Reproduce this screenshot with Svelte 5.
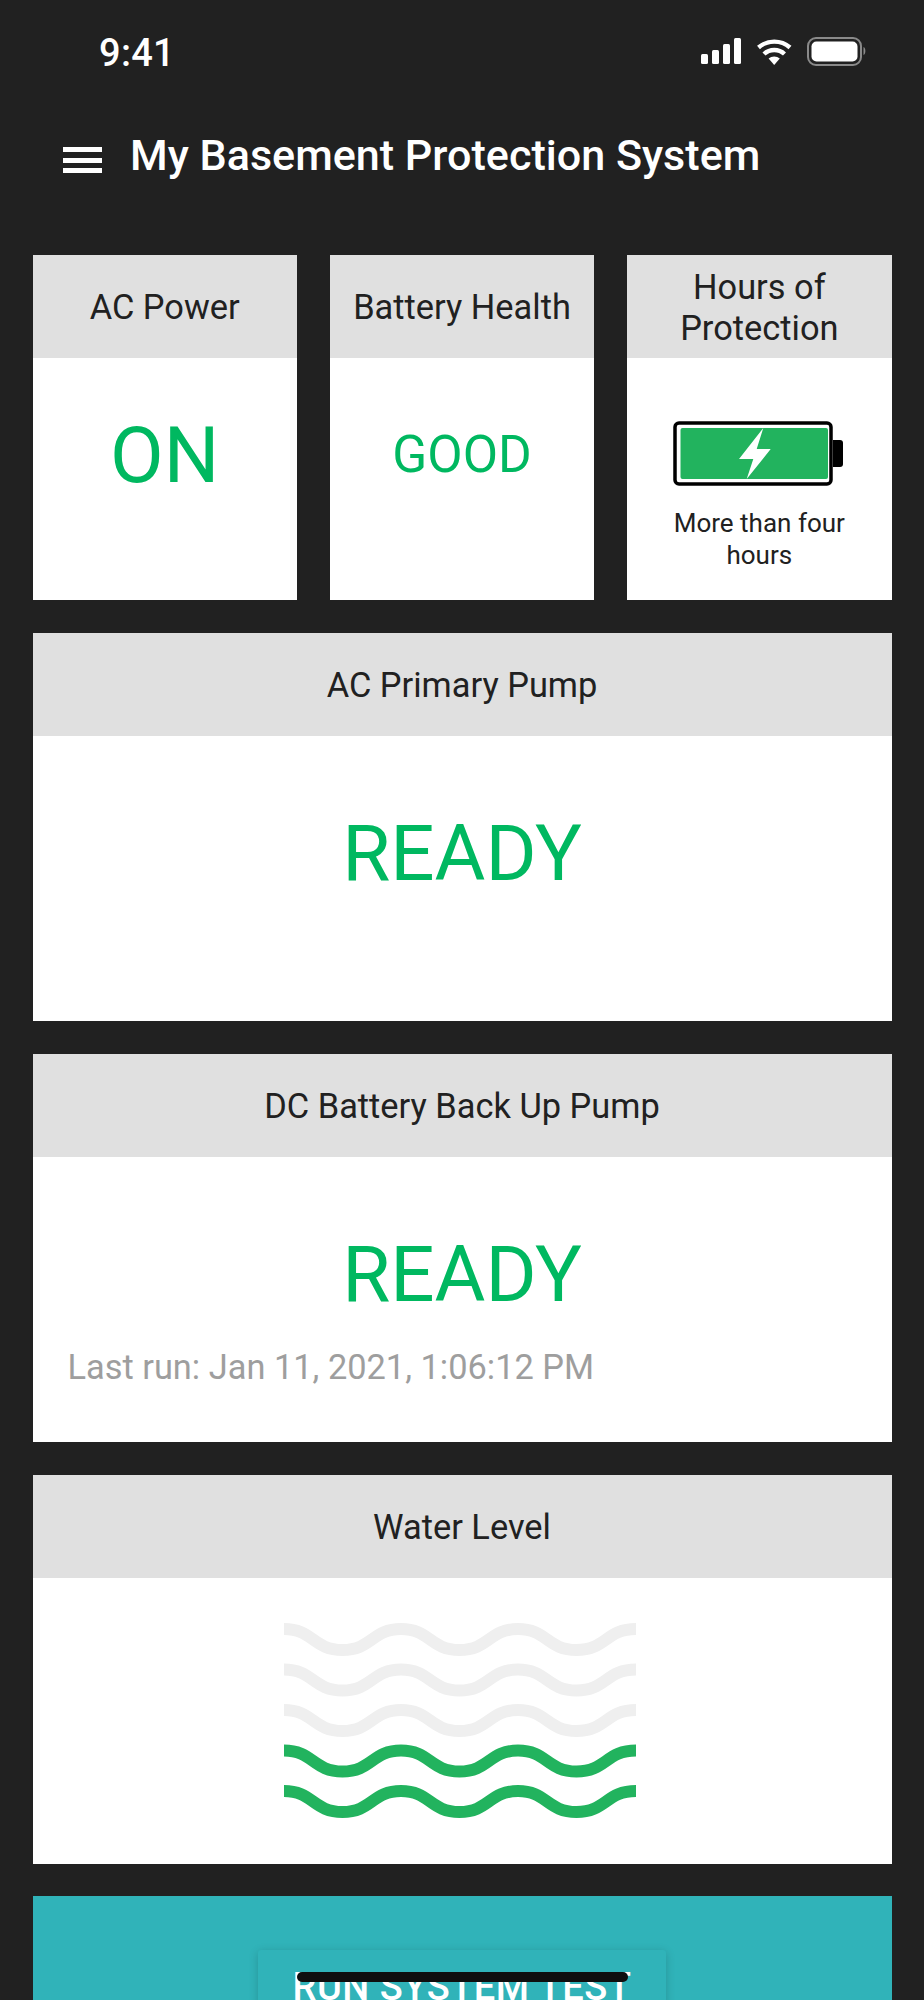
<script>
  const waves = [
    { y: 6, on: false },
    { y: 46.5, on: false },
    { y: 87, on: false },
    { y: 127.5, on: true },
    { y: 168, on: true }
  ]

  function wavePath(y) {
    const top = y
    const low = y + 21
    return `M0 ${top} C29 ${top} 29 ${low} 58.5 ${low} S88 ${top} 117 ${top} S146 ${low} 175.5 ${low} S205 ${top} 234 ${top} S263 ${low} 292.5 ${low} S322 ${top} 352 ${top}`
  }
</script>

<div class="screen">
  <div class="status">
    <span class="time">9:41</span>
    <svg class="status-icons" width="166" height="30" viewBox="0 0 166 30">
      <g fill="#fff">
        <rect x="1" y="17" width="7" height="10" rx="1.5" />
        <rect x="12" y="13" width="7" height="14" rx="1.5" />
        <rect x="23" y="7" width="7" height="20" rx="1.5" />
        <rect x="34" y="1" width="7" height="26" rx="1.5" />
      </g>
      <g fill="none" stroke="#fff" stroke-width="4.4">
        <path d="M58.5 10.5 A24 24 0 0 1 90 10.5" />
        <path d="M64 17 A15 15 0 0 1 84.5 17" />
      </g>
      <path d="M74.2 28 L68.6 21.6 A8.5 8.5 0 0 1 79.8 21.6 Z" fill="#fff" />
      <rect x="108" y="1" width="53" height="27" rx="8" fill="none" stroke="#8a8a8a" stroke-width="2" />
      <rect x="111.5" y="4.5" width="46" height="20" rx="5" fill="#fff" />
      <path d="M163.5 10 C166 11 166 17 163.5 18 Z" fill="#8a8a8a" />
    </svg>
  </div>

  <header class="app-bar">
    <span class="menu"><i></i><i></i><i></i></span>
    <h1>My Basement Protection System</h1>
  </header>

  <main>
    <div class="top-row">
      <section class="card">
        <h2>AC Power</h2>
        <div class="body"><p class="big on">ON</p></div>
      </section>
      <section class="card">
        <h2>Battery Health</h2>
        <div class="body"><p class="good">GOOD</p></div>
      </section>
      <section class="card">
        <h2>Hours of Protection</h2>
        <div class="body hours">
          <svg width="172" height="66" viewBox="0 0 172 66">
            <rect x="2" y="2" width="156" height="61" rx="4" fill="#fff" stroke="#000" stroke-width="3.5" />
            <rect x="7.500" y="7" width="147.500" height="51" rx="2" fill="#22b35e" />
            <path d="M90.300 7 L66 38 L80.300 38 L73.700 58 L97.700 28 L83.700 28 Z" fill="#fff" />
            <path d="M160 19 H167 Q170 19 170 22 V43 Q170 46 167 46 H160 Z" fill="#000" />
          </svg>
          <p>More than four hours</p>
        </div>
      </section>
    </div>

    <section class="card wide">
      <h2>AC Primary Pump</h2>
      <div class="body"><p class="big">READY</p></div>
    </section>

    <section class="card wide">
      <h2>DC Battery Back Up Pump</h2>
      <div class="body">
        <p class="big">READY</p>
        <p class="last-run">Last run: Jan 11, 2021, 1:06:12 PM</p>
      </div>
    </section>

    <section class="card wide">
      <h2>Water Level</h2>
      <div class="body water">
        <svg width="353" height="196" viewBox="0 0 353 196">
          {#each waves as w}
            <path d={wavePath(w.y)} fill="none" stroke={w.on ? '#22b35e' : '#efefef'} stroke-width="12" />
          {/each}
        </svg>
      </div>
    </section>

    <section class="test-panel">
      <button type="button">RUN SYSTEM TEST</button>
    </section>
  </main>

  <div class="home-bar"></div>
</div>

<style>
  :global(body) {
    margin: 0;
    background: #212121;
  }

  .screen {
    position: relative;
    height: 2000px;
    overflow: hidden;
    background: #212121;
    font-family: Roboto, sans-serif;
  }

  .status {
    display: flex;
    justify-content: space-between;
    align-items: center;
    height: 52px;
    padding: 26px 58px 0 99px;
    color: #fff;
  }

  .time {
    margin-top: 2px;
    font-size: 38px;
    font-weight: 500;
    line-height: 54px;
    letter-spacing: .3px;
  }

  .app-bar {
    display: flex;
    align-items: center;
    height: 62px;
    padding: 46px 0 0 63px;
    gap: 28px;
  }

  .menu {
    display: flex;
    flex-direction: column;
    gap: 5.500px;
    width: 39px;
    margin-top: 10px;
  }

  .menu i {
    display: block;
    height: 5px;
    background: #fff;
  }

  h1 {
    margin: 2px 0 0;
    color: #fff;
    font-size: 43.100px;
    font-weight: 500;
    line-height: 62px;
  }

  main {
    display: flex;
    flex-direction: column;
    gap: 32.800px;
    padding: 69px 32.500px 0;
  }

  .top-row {
    display: grid;
    grid-template-columns: repeat(3, 1fr);
    gap: 33px;
  }

  .card {
    display: flex;
    flex-direction: column;
    height: 345px;
    background: #fff;
  }

  .wide {
    height: 388.400px;
  }

  h2 {
    display: flex;
    align-items: center;
    justify-content: center;
    flex: none;
    box-sizing: border-box;
    height: 103px;
    margin: 0;
    padding: 2px 6px 0;
    background: #e0e0e0;
    color: #212121;
    font-size: 34.400px;
    font-weight: 400;
    line-height: 41px;
    text-align: center;
  }

  .body {
    flex: 1;
    display: flex;
    flex-direction: column;
    align-items: center;
    padding: 0 35px;
  }

  p {
    margin: 0;
  }

  .big {
    margin-top: 76px;
    color: #00b860;
    font-size: 78px;
    line-height: 84px;
  }

  .on {
    margin-top: 56px;
  }

  .good {
    margin-top: 69px;
    color: #00b860;
    font-size: 51.400px;
    line-height: 56px;
  }

  .hours {
    padding: 63px 20px 0;
    color: #212121;
    font-size: 26px;
    line-height: 32px;
    text-align: center;
  }

  .hours p {
    margin-top: 20px;
  }

  .last-run {
    align-self: flex-start;
    margin-top: 30px;
    color: #9e9e9e;
    font-size: 34.400px;
    line-height: 40px;
  }

  .water {
    padding: 45px 37px 0 33px;
  }

  .test-panel {
    display: flex;
    justify-content: center;
    height: 300px;
    padding-top: 54px;
    background: #30b3b9;
  }

  button {
    box-sizing: border-box;
    width: 408px;
    height: 96px;
    padding: 0 0 22px;
    border: 0;
    border-radius: 3px;
    background: #30b3b9;
    box-shadow: 0 2px 10px rgba(0, 0, 0, .18);
    color: #fff;
    font-family: inherit;
    font-size: 38px;
    font-weight: 500;
    letter-spacing: .5px;
  }

  .home-bar {
    position: absolute;
    left: 297px;
    top: 1972px;
    width: 331px;
    height: 10px;
    border-radius: 5px;
    background: #0f0f0f;
  }
</style>
